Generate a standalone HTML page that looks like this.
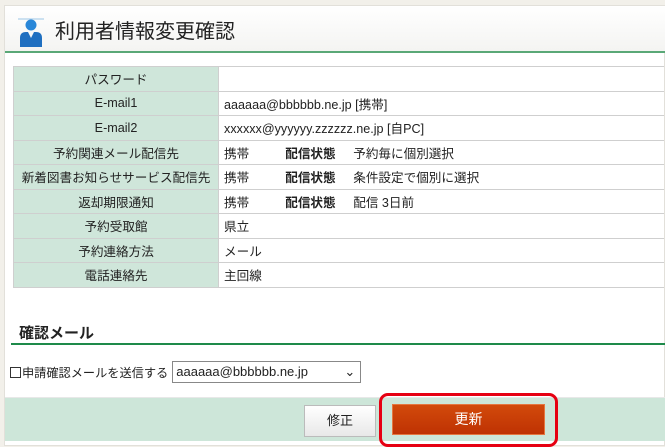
<!DOCTYPE html>
<html><head><meta charset="utf-8"><style>
*{margin:0;padding:0;box-sizing:border-box}
body{width:665px;height:446px;background:#f2f0ea;font-family:"Liberation Sans","Noto Sans CJK JP",sans-serif;position:relative;overflow:hidden;color:#222}
.panel{position:absolute;left:4px;top:5px;width:661px;height:441px;background:#fff;border:1px solid #e2e0da}
.hdr{position:absolute;left:0;top:0;width:661px;height:47px;background:linear-gradient(#fff,#f4f4f2);border-bottom:2px solid #5aa877}
.hdr h1{position:absolute;left:50px;top:9px;font-size:20px;font-weight:normal;color:#222}
table{position:absolute;left:8px;top:60px;border-collapse:collapse;font-size:12.6px}
td{border:1px solid #cfcfcf;border-width:1px 0 1px 1px;height:24.5px;padding:0 4px}
td.l{background:#cfe6da;width:206px;text-align:center}
td.v{width:447px;padding-left:5px}
b{font-weight:bold;display:inline-block;width:68px;margin-left:36px}
.sec{position:absolute;left:14px;top:316px;font-size:15px;font-weight:bold}
.line{position:absolute;left:6px;top:337px;width:655px;height:2px;background:#1e8a4a}
.row{position:absolute;left:5px;top:355px;font-size:12.2px;display:flex;align-items:center}
.cb{width:11px;height:11px;border:1px solid #333;margin-right:1px}
.sel{margin-left:4px;width:189px;height:22px;border:1px solid #888;padding-left:3px;line-height:20px;font-size:13px;position:relative}
.foot{position:absolute;left:0;top:391px;width:661px;height:44px;background:#cde6d9;border-top:1px solid #e8e8e8}
.b1{position:absolute;left:299px;top:399px;width:72px;height:32px;border:1px solid #bbb;background:linear-gradient(#fff,#e8e8e8);font-size:13px;text-align:center;line-height:30px}
.ring{position:absolute;left:374px;top:387px;width:179px;height:54px;border:3px solid #e60012;border-radius:9px}
.b2{position:absolute;left:387px;top:398px;width:153px;height:31px;background:linear-gradient(#d24a0b,#bf3203);border:1px solid #e5763f;color:#fff;font-size:14px;text-align:center;line-height:29px}
</style></head><body>
<div class="panel">
<div class="hdr">
<svg style="position:absolute;left:13px;top:12px" width="26" height="32" viewBox="0 0 26 32"><line x1="0" y1="1" x2="26" y2="1" stroke="#9cc6e6" stroke-width="1"/><circle cx="13" cy="7" r="5.5" fill="#2a87d8"/><path d="M2 29 L2 20 Q2 14 8 14 L10 14 L13 20 L16 14 L18 14 Q24 14 24 20 L24 29 Z" fill="#1f6fc0"/></svg>
<h1>利用者情報変更確認</h1></div>
<table>
<tr><td class="l">パスワード</td><td class="v"></td></tr>
<tr><td class="l">E-mail1</td><td class="v">aaaaaa@bbbbbb.ne.jp [携帯]</td></tr>
<tr><td class="l">E-mail2</td><td class="v">xxxxxx@yyyyyy.zzzzzz.ne.jp [自PC]</td></tr>
<tr><td class="l">予約関連メール配信先</td><td class="v">携帯<b>配信状態</b>予約毎に個別選択</td></tr>
<tr><td class="l">新着図書お知らせサービス配信先</td><td class="v">携帯<b>配信状態</b>条件設定で個別に選択</td></tr>
<tr><td class="l">返却期限通知</td><td class="v">携帯<b>配信状態</b>配信 3日前</td></tr>
<tr><td class="l">予約受取館</td><td class="v">県立</td></tr>
<tr><td class="l">予約連絡方法</td><td class="v">メール</td></tr>
<tr><td class="l">電話連絡先</td><td class="v">主回線</td></tr>
</table>
<div class="sec">確認メール</div><div class="line"></div>
<div class="row"><span class="cb"></span>申請確認メールを送信する<div class="sel">aaaaaa@bbbbbb.ne.jp<span style="position:absolute;right:5px;top:0">&#8964;</span></div></div>
<div class="foot"></div>
<div class="b1">修正</div>
<div class="ring"></div>
<div class="b2">更新</div>
</div>
</body></html>
